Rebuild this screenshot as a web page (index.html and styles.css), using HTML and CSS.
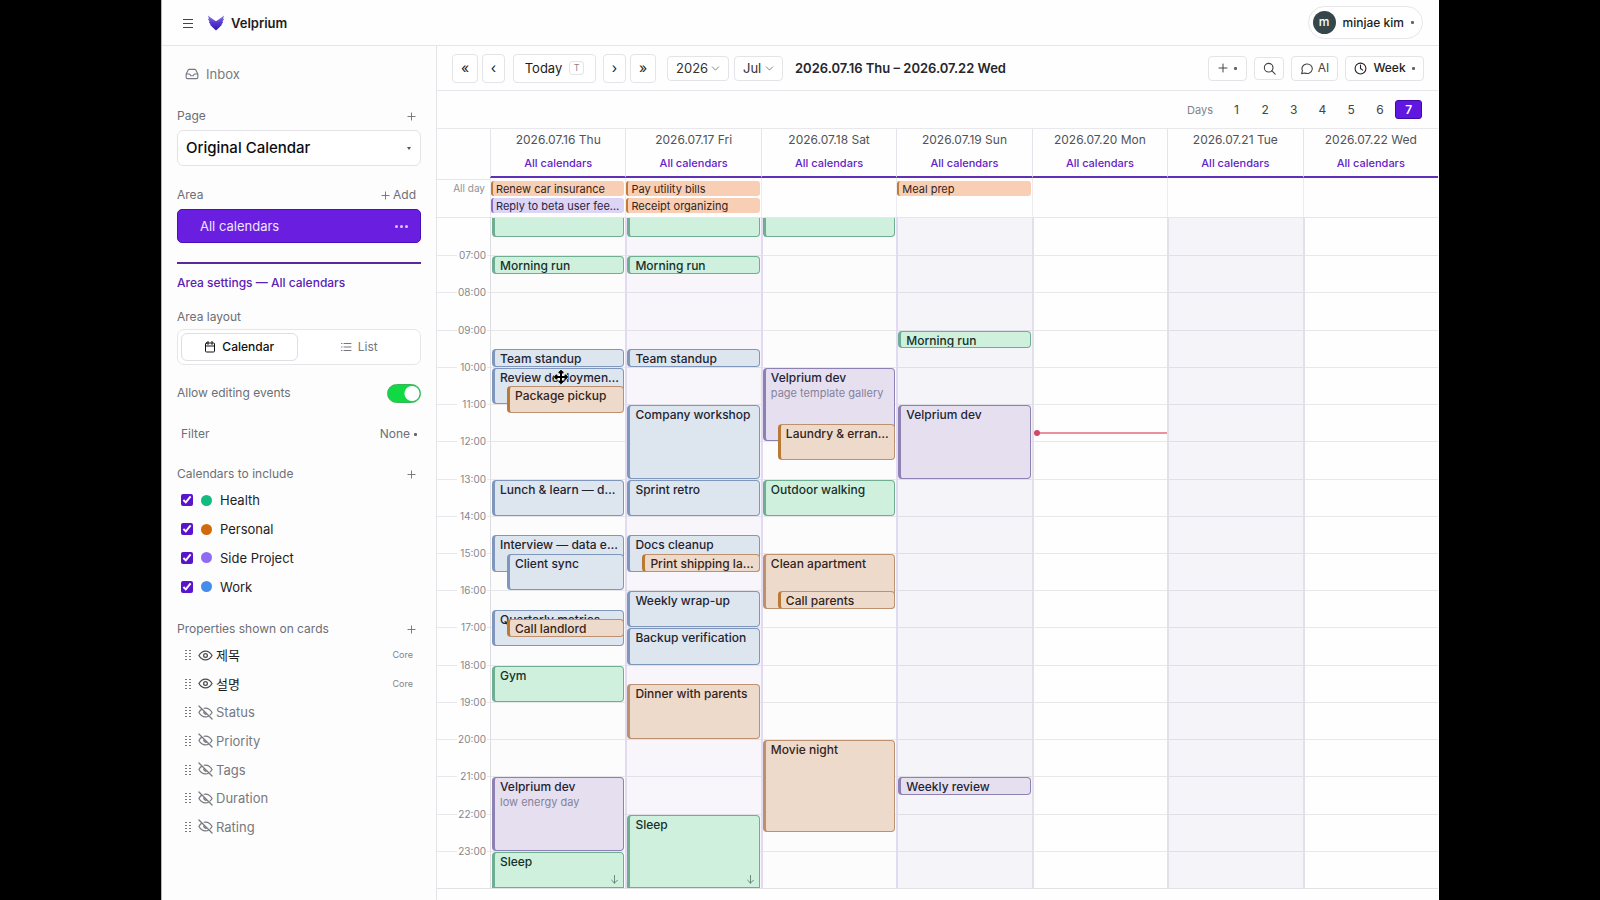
FILE: index.html
```html
<!DOCTYPE html>
<html lang="en">
<head>
<meta charset="utf-8">
<title>Velprium</title>
<link rel="stylesheet" href="styles.css">
</head>
<body>
<svg class="defs" aria-hidden="true">
  <symbol id="eye" viewBox="0 0 24 24"><path d="M1.500 12S5.500 5 12 5s10.500 7 10.500 7-4 7-10.500 7S1.500 12 1.500 12z"/><circle cx="12" cy="12" r="3"/></symbol>
  <symbol id="eye-off" viewBox="0 0 24 24"><path d="M9.900 5.200A10 10 0 0 1 12 5c6.500 0 10.500 7 10.500 7a18 18 0 0 1-3 3.800M6.300 6.600C3.200 8.600 1.500 12 1.500 12s4 7 10.500 7c2 0 3.800-.6 5.300-1.500M9.900 9.900a3 3 0 0 0 4.200 4.200M1.500 1.500l21 21"/></symbol>
  <symbol id="grip" viewBox="0 0 6 10"><path d="M0 .5h2M4 .5h2M0 3.500h2M4 3.500h2M0 6.500h2M4 6.500h2M0 9.500h2M4 9.500h2"/></symbol>
  <symbol id="chev" viewBox="0 0 10 10"><path d="M1.500 3.200L5 6.800l3.500-3.600"/></symbol>
  <symbol id="down" viewBox="0 0 10 10"><path d="M5 .5v8.500M1.800 5.800L5 9l3.200-3.200"/></symbol>
  <symbol id="plus" viewBox="0 0 10 10"><path d="M5 1v8M1 5h8"/></symbol>
</svg>
<div class="app">
  <header class="topbar">
    <button class="bare menu" aria-label="Menu"><svg viewBox="0 0 10 10"><path d="M0 .5h10M0 4.500h10M0 8.500h10"/></svg></button>
    <svg class="logo" viewBox="0 0 16 16"><defs><linearGradient id="lg" x1="0" y1="0" x2="0" y2="1"><stop offset="0" stop-color="#8f84d8"/><stop offset=".45" stop-color="#5a3cd4"/><stop offset="1" stop-color="#3410a8"/></linearGradient></defs><path fill="url(#lg)" d="M0 .5L5 4.200 8 6.200l3-2L16 .5l-.8 3.300.8.200-1.500 2.800.7.200-1.700 2.500.5.300-2.800 2.700L8 15.500 4.800 12.500 2 9.800l.5-.3L.8 7l.7-.2L0 4l.8-.2z"/></svg>
    <span class="brand">Velprium</span>
    <button class="user"><span class="avatar">m</span><span>minjae kim</span><i class="tick"></i></button>
  </header>
  <div class="frame">
    <aside class="side">
      <a class="inbox" href="#"><svg viewBox="0 0 24 24"><path d="M22 12h-6l-2 3h-4l-2-3H2M5.500 5.100L2 12v6a2 2 0 0 0 2 2h16a2 2 0 0 0 2-2v-6l-3.500-6.900A2 2 0 0 0 16.800 4H7.200a2 2 0 0 0-1.700 1.100z"/></svg>Inbox</a>
      <div class="label page-label"><label for="page">Page</label><button class="bare add" aria-label="Add page"><svg><use href="#plus"/></svg></button></div>
      <div class="page-pick"><select id="page"><option>Original Calendar</option></select><i class="tri"></i></div>
      <div class="label area-label"><span>Area</span><button class="bare add"><svg><use href="#plus"/></svg>Add</button></div>
      <button class="area">All calendars<span class="dots"><i></i><i></i><i></i></span></button>
      <h2 class="settings">Area settings — All calendars</h2>
      <div class="label layout-label">Area layout</div>
      <div class="segment">
        <button class="on"><svg viewBox="0 0 24 24"><rect x="3" y="4" width="18" height="18" rx="2"/><path d="M16 1v6M8 1v6M3 10h18"/></svg>Calendar</button>
        <button><svg viewBox="0 0 24 24"><path d="M8 5h14M8 12h14M8 19h14M3 5h1M3 12h1M3 19h1"/></svg>List</button>
      </div>
      <div class="label edit"><label for="edit">Allow editing events</label><input class="switch" type="checkbox" role="switch" id="edit" checked></div>
      <div class="label filter"><span>Filter</span><button class="bare">None<i class="tick"></i></button></div>
      <div class="label include"><span>Calendars to include</span><button class="bare add" aria-label="Add calendar"><svg><use href="#plus"/></svg></button></div>
      <div class="cals">
        <label><input type="checkbox" checked><i class="dot health"></i>Health</label>
        <label><input type="checkbox" checked><i class="dot personal"></i>Personal</label>
        <label><input type="checkbox" checked><i class="dot project"></i>Side Project</label>
        <label><input type="checkbox" checked><i class="dot work"></i>Work</label>
      </div>
      <div class="label props-label"><span>Properties shown on cards</span><button class="bare add" aria-label="Add property"><svg><use href="#plus"/></svg></button></div>
      <ul class="props">
        <li class="shown"><svg class="grip"><use href="#grip"/></svg><svg class="eye"><use href="#eye"/></svg>제목<small>Core</small></li>
        <li class="shown"><svg class="grip"><use href="#grip"/></svg><svg class="eye"><use href="#eye"/></svg>설명<small>Core</small></li>
        <li><svg class="grip"><use href="#grip"/></svg><svg class="eye"><use href="#eye-off"/></svg>Status</li>
        <li><svg class="grip"><use href="#grip"/></svg><svg class="eye"><use href="#eye-off"/></svg>Priority</li>
        <li><svg class="grip"><use href="#grip"/></svg><svg class="eye"><use href="#eye-off"/></svg>Tags</li>
        <li><svg class="grip"><use href="#grip"/></svg><svg class="eye"><use href="#eye-off"/></svg>Duration</li>
        <li><svg class="grip"><use href="#grip"/></svg><svg class="eye"><use href="#eye-off"/></svg>Rating</li>
      </ul>
    </aside>
    <main class="main">
      <div class="toolbar">
        <div class="nav">
          <button class="btn wide">«</button><button class="btn">‹</button>
          <button class="btn today">Today<kbd>T</kbd></button>
          <button class="btn">›</button><button class="btn wide">»</button>
        </div>
        <div class="picks">
          <div class="pick year"><select aria-label="Year"><option>2026</option></select><svg><use href="#chev"/></svg></div>
          <div class="pick month"><select aria-label="Month"><option>Jul</option></select><svg><use href="#chev"/></svg></div>
        </div>
        <h1 class="range">2026.07.16 Thu – 2026.07.22 Wed</h1>
        <div class="tools">
          <button class="tool new" aria-label="New"><svg class="small"><use href="#plus"/></svg><i class="tick"></i></button>
          <button class="tool find" aria-label="Search"><svg viewBox="0 0 24 24"><circle cx="10.500" cy="10.500" r="8"/><path d="M16.500 16.500L22.500 22.500"/></svg></button>
          <button class="tool ai"><svg viewBox="0 0 24 24"><path d="M3 21.500l1.500-5.500A9.500 8.800 0 1 1 9 20.300z"/></svg>AI</button>
          <button class="tool week"><svg viewBox="0 0 24 24"><circle cx="12" cy="12" r="10"/><path d="M12 5.500V12l4 3"/></svg>Week<i class="tick"></i></button>
        </div>
      </div>
      <div class="daycount">
        <span>Days</span>
        <div class="counts"><button>1</button><button>2</button><button>3</button><button>4</button><button>5</button><button>6</button><button class="on">7</button></div>
      </div>
      <div class="heads">
        <div class="corner"></div>
        <div class="head">2026.07.16 Thu<a href="#">All calendars</a></div>
        <div class="head">2026.07.17 Fri<a href="#">All calendars</a></div>
        <div class="head">2026.07.18 Sat<a href="#">All calendars</a></div>
        <div class="head">2026.07.19 Sun<a href="#">All calendars</a></div>
        <div class="head">2026.07.20 Mon<a href="#">All calendars</a></div>
        <div class="head">2026.07.21 Tue<a href="#">All calendars</a></div>
        <div class="head">2026.07.22 Wed<a href="#">All calendars</a></div>
      </div>
      <div class="allday">
        <div class="corner">All day</div>
        <div class="slot"><div class="chip personal">Renew car insurance</div><div class="chip project">Reply to beta user feedback</div></div>
        <div class="slot"><div class="chip personal">Pay utility bills</div><div class="chip personal">Receipt organizing</div></div>
        <div class="slot"></div>
        <div class="slot"><div class="chip personal">Meal prep</div></div>
        <div class="slot"></div>
        <div class="slot"></div>
        <div class="slot"></div>
      </div>
      <div class="board">
        <ol class="hours">
          <li></li><li><span>07:00</span></li><li><span>08:00</span></li><li><span>09:00</span></li><li><span>10:00</span></li><li><span>11:00</span></li><li><span>12:00</span></li><li><span>13:00</span></li><li><span>14:00</span></li><li><span>15:00</span></li><li><span>16:00</span></li><li><span>17:00</span></li><li><span>18:00</span></li><li><span>19:00</span></li><li><span>20:00</span></li><li><span>21:00</span></li><li><span>22:00</span></li><li><span>23:00</span></li>
        </ol>
        <div class="day thu">
          <div class="event health cut" style="grid-row:1/3"></div>
          <div class="event health" style="grid-row:5/7">Morning run</div>
          <div class="event work" style="grid-row:15/17">Team standup</div>
          <div class="event work" style="grid-row:17/21">Review deployment plan<svg class="cursor" viewBox="0 0 14 14"><path class="halo" d="M7 1v12M1 7h12"/><path d="M7 1v12M1 7h12M5.500 2.500L7 1l1.500 1.500M5.500 11.500L7 13l1.500-1.500M2.500 5.500L1 7l1.500 1.500M11.500 5.500L13 7l-1.500 1.500"/></svg></div>
          <div class="event personal inner" style="grid-row:19/22">Package pickup</div>
          <div class="event work" style="grid-row:29/33">Lunch &amp; learn — design</div>
          <div class="event work" style="grid-row:35/39">Interview — data engineer</div>
          <div class="event work inner" style="grid-row:37/41">Client sync</div>
          <div class="event work" style="grid-row:43/47">Quarterly metrics</div>
          <div class="event personal inner" style="grid-row:44/46">Call landlord</div>
          <div class="event health" style="grid-row:49/53">Gym</div>
          <div class="event project" style="grid-row:61/69">Velprium dev<p>low energy day</p></div>
          <div class="event health runs-on" style="grid-row:69/73">Sleep<svg class="more"><use href="#down"/></svg></div>
        </div>
        <div class="day fri">
          <div class="event health cut" style="grid-row:1/3"></div>
          <div class="event health" style="grid-row:5/7">Morning run</div>
          <div class="event work" style="grid-row:15/17">Team standup</div>
          <div class="event work" style="grid-row:21/29">Company workshop</div>
          <div class="event work" style="grid-row:29/33">Sprint retro</div>
          <div class="event work" style="grid-row:35/39">Docs cleanup</div>
          <div class="event personal inner" style="grid-row:37/39">Print shipping labels</div>
          <div class="event work" style="grid-row:41/45">Weekly wrap-up</div>
          <div class="event work" style="grid-row:45/49">Backup verification</div>
          <div class="event personal" style="grid-row:51/57">Dinner with parents</div>
          <div class="event health runs-on" style="grid-row:65/73">Sleep<svg class="more"><use href="#down"/></svg></div>
        </div>
        <div class="day sat">
          <div class="event health cut" style="grid-row:1/3"></div>
          <div class="event project" style="grid-row:17/25">Velprium dev<p>page template gallery</p></div>
          <div class="event personal inner" style="grid-row:23/27">Laundry &amp; errands</div>
          <div class="event health" style="grid-row:29/33">Outdoor walking</div>
          <div class="event personal" style="grid-row:37/43">Clean apartment</div>
          <div class="event personal inner" style="grid-row:41/43">Call parents</div>
          <div class="event personal" style="grid-row:57/67">Movie night</div>
        </div>
        <div class="day sun">
          <div class="event health" style="grid-row:13/15">Morning run</div>
          <div class="event project" style="grid-row:21/29">Velprium dev</div>
          <div class="event project" style="grid-row:61/63">Weekly review</div>
        </div>
        <div class="day mon"><div class="now" style="grid-row:24/25"></div></div>
        <div class="day tue"></div>
        <div class="day wed"></div>
      </div>
    </main>
  </div>
</div>
</body>
</html>
```
FILE: styles.css
```css
* { box-sizing: border-box; }
html, body { height: 100%; }
body { margin: 0; padding: 0 161px; background: #000; font: 12px/18px Inter, "Noto Sans CJK KR", sans-serif; color: #1c1c22; }
button, select, input { font: inherit; color: inherit; margin: 0; }
button { display: flex; align-items: center; justify-content: center; padding: 0; cursor: pointer; }
svg { fill: none; stroke: currentColor; stroke-width: 2; stroke-linecap: round; stroke-linejoin: round; flex: none; }
i { flex: none; }
.defs { display: none; }
.bare { border: 0; background: none; }
.tick { width: 3px; height: 3px; border-radius: 1px; background: #666; }
#plus, #chev, #down { stroke-width: 1; }
#grip { stroke-linecap: butt; stroke-width: 1; }

.app { min-height: 100%; height: 100vh; display: flex; flex-direction: column; background: #fefefe; border-left: 1px solid #b5b5b8; }
.topbar { flex: none; height: 46px; display: flex; align-items: center; padding: 0 16px 0 21px; border-bottom: 1px solid #e6e6ea; }
.menu svg { width: 10px; height: 10px; stroke-width: 1; stroke: #444; margin-top: 3px; }
.logo { width: 16px; height: 16px; margin: 0 7px 0 15px; stroke: none; }
.brand { font-size: 13px; font-weight: 600; }
.user { margin-left: auto; height: 33px; gap: 7px; padding: 0 8px 0 4px; border: 1px solid #e6e6ea; border-radius: 17px; background: #fff; font-weight: 500; }
.avatar { width: 23px; height: 23px; border-radius: 50%; background: #36474b; color: #fff; line-height: 22px; }
.frame { flex: 1; min-height: 0; display: flex; }

.side { flex: none; width: 275px; padding: 15px 15px 0 15px; border-right: 1px solid #e4e4e8; background: #fdfdfd; }
.inbox { display: flex; align-items: center; gap: 7px; height: 26px; padding-left: 8px; color: #777a80; text-decoration: none; font-size: 13px; }
.inbox svg { width: 14px; height: 14px; }
.label { display: flex; align-items: center; justify-content: space-between; height: 20px; color: #6c6f75; }
.add { gap: 3px; padding-right: 5px; }
.add svg { width: 9px; height: 9px; }
.page-label { margin-top: 19px; }
.page-pick { position: relative; margin-top: 4px; }
.page-pick select { appearance: none; width: 100%; height: 36px; padding: 0 8px; border: 1px solid #e4e4e8; border-radius: 6px; background: #fff; font-size: 15px; font-weight: 500; color: #0c0c10; }
.tri { position: absolute; right: 10px; top: 17px; border: 2px solid transparent; border-top: 3px solid #555; }
.area-label { margin-top: 19px; }
.area { width: 100%; height: 34px; margin-top: 4px; padding: 0 12px 0 22px; justify-content: space-between; border: 1px solid #4a10b8; border-radius: 5px; background: #6a1fe0; color: #efe4ff; font-size: 13px; }
.dots { display: flex; gap: 2px; }
.dots i { width: 3px; height: 3px; border-radius: 50%; background: #dcc6ff; }
.settings { margin: 19px 0 0; padding-top: 9px; border-top: 2px solid #5a2a9a; font-size: 12px; line-height: 20px; font-weight: 500; color: #5b21b6; }
.layout-label { margin-top: 14px; }
.segment { display: flex; gap: 3px; height: 36px; margin-top: 2px; padding: 3px; border: 1px solid #e6e6ea; border-radius: 7px; background: #fff; }
.segment button { flex: 1; gap: 6px; border: 1px solid transparent; border-radius: 6px; background: none; color: #75777c; }
.segment .on { border-color: #dedee3; color: #111; font-weight: 500; }
.segment svg { width: 12px; height: 12px; }
.edit { margin-top: 18px; }
.switch { appearance: none; width: 34px; height: 19px; border: 1px solid #35b558; border-radius: 10px; background: radial-gradient(circle at 24px 50%, #fff 7px, #10d944 8px); }
.filter { margin-top: 21px; padding: 0 4px; }
.filter .bare { gap: 4px; }
.include { margin-top: 20px; }
.cals { display: grid; grid-auto-rows: 1fr; height: 115px; margin-top: 2px; }
.cals label { display: flex; align-items: center; padding-left: 4px; font-size: 13px; color: #222226; }
.cals input { width: 12px; height: 12px; margin: 0 8px 0 0; accent-color: #5a14cc; }
.dot { width: 11px; height: 11px; margin-right: 8px; border-radius: 50%; }
.dot.health { background: #12bb80; }
.dot.personal { background: #d06a0c; }
.dot.project { background: #8f6cf0; }
.dot.work { background: #468cec; }
.props-label { margin-top: 18px; }
.props { display: grid; grid-auto-rows: 1fr; height: 200px; margin: 2px 0 0; padding: 0; list-style: none; font-size: 13px; color: #77797f; }
.props li { display: flex; align-items: center; padding: 0 8px; }
.props .shown { color: #1c1c20; }
.grip { width: 6px; height: 10px; margin-right: 7px; color: #777; }
.eye { width: 15px; height: 15px; margin-right: 3px; }
.shown .eye { color: #4a4a50; }
.props small { margin-left: auto; font-size: 9px; color: #808388; }

.main { flex: 1; min-width: 0; display: flex; flex-direction: column; padding-right: 1px; }
.toolbar { flex: none; display: flex; align-items: center; height: 45px; padding: 0 14px 0 15px; border-bottom: 1px solid #e8e8ec; }
.nav, .picks, .tools { display: flex; align-items: center; }
.btn, .tool, .pick select { border: 1px solid #e4e4e8; border-radius: 4px; background: #fff; }
.btn { width: 23px; height: 29px; margin-right: 4px; font-size: 14px; }
.wide { width: 26px; }
.today { width: 83px; gap: 7px; margin: 0 7px 0 4px; font-size: 13px; }
.today kbd { width: 15px; height: 14px; border: 1px solid #e4e4e8; border-radius: 3px; font: 9px/12px Inter, sans-serif; color: #888; }
.picks { gap: 5px; margin: 0 12px 0 7px; }
.pick { position: relative; }
.pick select { appearance: none; height: 25px; padding: 0 8px; color: #333; font-size: 13px; }
.year select { width: 62px; }
.month select { width: 49px; }
.pick svg { position: absolute; right: 9px; top: 8px; width: 9px; height: 9px; color: #777; pointer-events: none; }
.range { margin: 0; font-size: 13px; font-weight: 600; color: #26262c; }
.tools { margin-left: auto; gap: 7px; }
.tool { height: 25px; gap: 5px; color: #444; }
.tool svg { width: 13px; height: 13px; }
.tool .small { width: 10px; height: 10px; }
.new { width: 39px; gap: 6px; }
.find { width: 30px; height: 23px; }
.ai { width: 47px; }
.week { width: 79px; gap: 6px; color: #222; font-weight: 500; }
.daycount { flex: none; display: flex; align-items: center; justify-content: flex-end; gap: 10px; height: 38px; padding-right: 16px; border-bottom: 1px solid #e8e8ec; color: #808288; font-size: 11px; }
.counts { display: grid; grid-template-columns: repeat(7, 1fr); gap: 2px; width: 199px; font-size: 12px; }
.counts button { height: 19px; border: 0; border-radius: 3px; background: none; color: #444; }
.counts .on { border: 1px solid #3d0aa8; background: #6018e0; color: #fff; font-weight: 600; }

.heads, .allday, .board { display: grid; grid-template-columns: 53px repeat(7, minmax(0, 1fr)); }
.heads { flex: none; height: 49px; }
.head { display: flex; flex-direction: column; align-items: center; justify-content: space-between; padding: 2px 0 4px; border-left: 1px solid #e4e4ea; border-bottom: 2px solid #6030b8; color: #505258; }
.head a { color: #6422c8; font-size: 11px; line-height: 18px; font-weight: 500; text-decoration: none; }
.allday { flex: none; height: 40px; border-bottom: 1px solid #e6e6ea; }
.allday .corner { margin-top: 1px; padding-right: 5px; border-top: 1px solid #e6e6ea; font-size: 10px; line-height: 17px; text-align: right; color: #909298; }
.slot { display: flex; flex-direction: column; gap: 2px; padding: 3px 1px 0 0; border-left: 1px solid #ececf0; }
.chip { height: 15px; padding: 0 4px 0 3px; border-left: 2px solid; border-radius: 3px; font-size: 11px; line-height: 16px; white-space: nowrap; overflow: hidden; text-overflow: ellipsis; }
.chip.personal { background: #f8cfb4; border-color: #c07c3c; color: #33241a; }
.chip.project { background: #ddd5f6; border-color: #8a6fd0; color: #2a2440; }

.board { flex: 1; min-height: 0; margin-bottom: 11px; grid-template-rows: minmax(0, 1fr); border-bottom: 1px solid #e2e2e6; }
.hours { grid-area: 1 / 1 / 2 / -1; display: grid; grid-template-rows: repeat(18, minmax(0, 1fr)); margin: 0; padding: 0; list-style: none; }
.hours li { border-top: 1px solid #e8e8ec; }
.hours li:first-child { border-color: transparent; }
.hours span { display: block; width: 30px; margin: -7px 0 0 20px; padding-right: 1px; background: #fefefe; font-size: 10px; line-height: 13px; text-align: right; color: #85878c; }
.day { grid-row: 1; display: grid; grid-template-rows: repeat(72, minmax(0, 1fr)); border-left: 2px solid #e2daf2; }
.thu { grid-column: 2; border-left: 1px solid #dddde4; background: rgba(90, 50, 180, .01); }
.fri { grid-column: 3; background: rgba(90, 50, 180, .04); }
.sat { grid-column: 4; background: rgba(90, 50, 180, .01); }
.sun { grid-column: 5; background: rgba(80, 50, 140, .05); }
.mon { grid-column: 6; border-color: #e2e0e8; }
.tue { grid-column: 7; border-color: #e2e0e8; background: rgba(70, 50, 140, .05); }
.wed { grid-column: 8; border-color: #e2e0e8; }
.event { grid-column: 1; position: relative; margin: 1px 1px 0 0; padding: 0 3px 0 5px; border: 1px solid; border-left-width: 3px; border-radius: 4px; font-size: 12px; line-height: 18px; font-weight: 500; white-space: nowrap; overflow: hidden; text-overflow: ellipsis; }
.thu .event { margin-left: 1px; }
.day .inner { margin-left: 15px; }
.thu .inner { margin-left: 16px; }
.event p { margin: -2px 0 0; font-size: 11px; line-height: 16px; font-weight: 400; color: #85829a; }
.event.health { background: #d0f0de; border-color: #6fae92; color: #16302a; }
.event.work { background: #dde5ef; border-color: #7f97bd; color: #1e2430; }
.event.personal { background: #eddacb; border-color: #bd9070; color: #33241c; }
.event.project { background: #e5dff0; border-color: #8d80b2; color: #241f33; }
.event.inner.personal { border-left-color: #b97a35; }
.event.cut { margin-top: 0; border-top: 0; border-radius: 0 0 4px 4px; }
.event.runs-on { border-radius: 4px 4px 0 0; }
.more { position: absolute; right: 4px; bottom: 3px; width: 9px; height: 9px; opacity: .6; }
.cursor { position: absolute; left: 59px; top: 1px; width: 14px; height: 14px; stroke: #000; stroke-width: 2; }
.cursor .halo { stroke: #fff; stroke-width: 4; }
.now { height: 2px; background: #ec8f9f; position: relative; }
.now::before { content: ""; position: absolute; left: 0; top: -2px; width: 6px; height: 6px; border-radius: 50%; background: #d0486a; }
```
